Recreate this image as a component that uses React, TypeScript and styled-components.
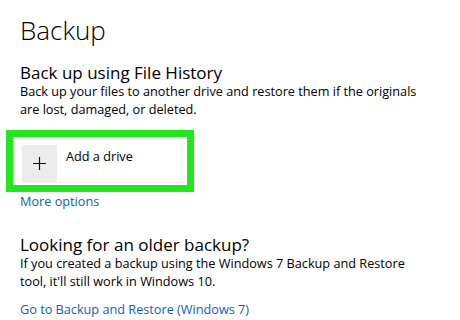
import styled, { createGlobalStyle } from "styled-components";

const GlobalStyle = createGlobalStyle`
  body {
    margin: 0;
    background: #ffffff;
    font-family: "Open Sans", "Noto Sans", sans-serif;
    color: #000000;
  }
`;

const Page = styled.div`
  width: 460px;
  height: 320px;
  overflow: hidden;
  padding: 12px 0 0 20px;
  box-sizing: border-box;
`;

const Title = styled.h1`
  margin: 0;
  font-size: 26px;
  font-weight: 300;
  line-height: 36px;
`;

const SectionTitle = styled.h2<{ top: number }>`
  margin: ${({ top }) => top}px 0 0;
  font-size: 17px;
  font-weight: 400;
  line-height: 18px;
`;

const Text = styled.p`
  margin: 0;
  font-size: 12.7px;
  line-height: 18px;
  white-space: nowrap;
`;

const Highlight = styled.div`
  margin: 12px 0 0 -14px;
  width: 188px;
  height: 62px;
  box-sizing: border-box;
  border: 7px solid #22e61e;
  padding: 8px 0 0 9px;
`;

const DriveButton = styled.div`
  display: flex;
  align-items: flex-start;
  gap: 9px;
  width: 160px;
  height: 38px;
  box-sizing: border-box;
  border-right: 1px solid #f0f0f0;
  border-bottom: 1px solid #f0f0f0;
`;

const PlusTile = styled.div`
  width: 35px;
  height: 37px;
  background: #ececec;
  display: flex;
  align-items: center;
  justify-content: center;
`;

const ButtonLabel = styled.span`
  font-size: 12.7px;
  line-height: 20px;
  margin-top: 1px;
`;

const Link = styled.a<{ top: number }>`
  display: block;
  margin-top: ${({ top }) => top}px;
  font-size: 12.7px;
  line-height: 17px;
  color: #0a62b8;
  text-decoration: none;
`;

export default function App() {
  return (
    <>
      <GlobalStyle />
      <Page>
        <Title>Backup</Title>
        <SectionTitle top={16}>Back up using File History</SectionTitle>
        <Text>
          Back up your files to another drive and restore them if the originals
          <br />
          are lost, damaged, or deleted.
        </Text>
        <Highlight>
          <DriveButton>
            <PlusTile>
              <svg width="15" height="15" viewBox="0 0 15 15">
                <path d="M7.5 1v13M1 7.5h13" stroke="#111" strokeWidth="1.2" />
              </svg>
            </PlusTile>
            <ButtonLabel>Add a drive</ButtonLabel>
          </DriveButton>
        </Highlight>
        <Link top={1}>More options</Link>
        <SectionTitle top={26}>Looking for an older backup?</SectionTitle>
        <Text>
          If you created a backup using the Windows 7 Backup and Restore
          <br />
          tool, it'll still work in Windows 10.
        </Text>
        <Link top={11}>Go to Backup and Restore (Windows 7)</Link>
      </Page>
    </>
  );
}
